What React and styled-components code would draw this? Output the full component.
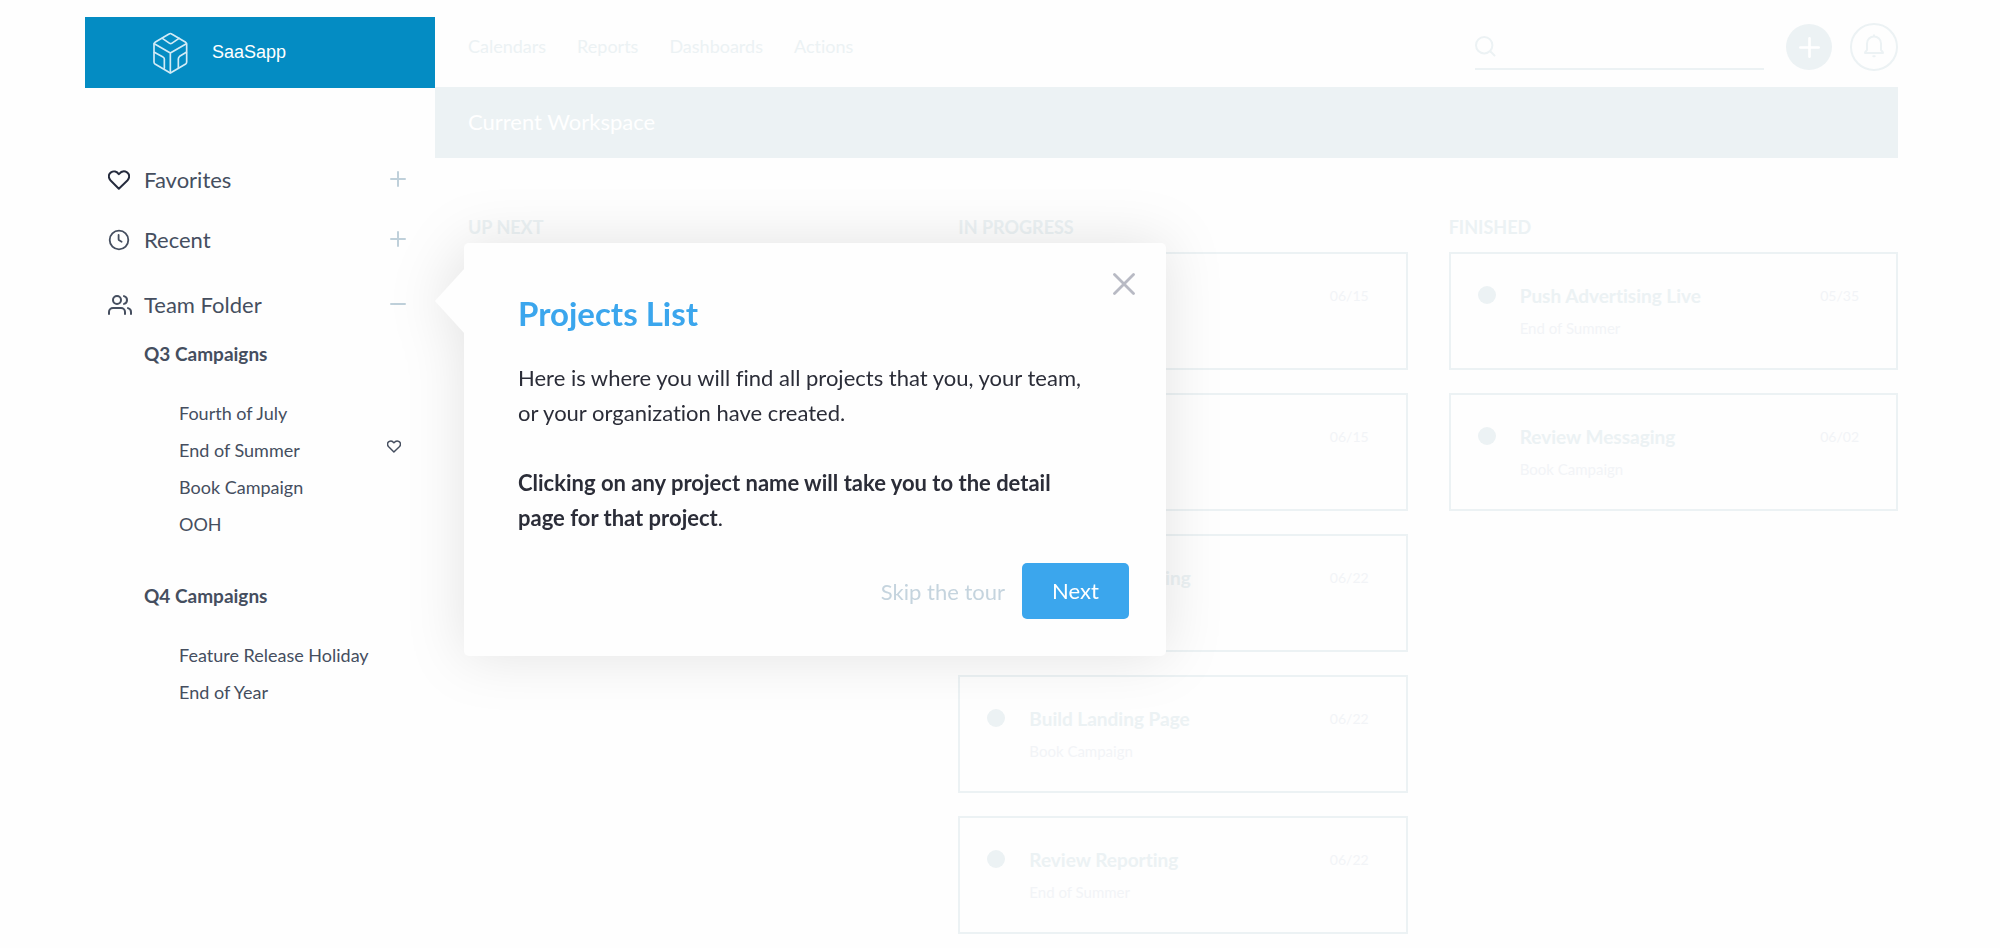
import styled, { createGlobalStyle } from "styled-components";
import { FiUsers } from "react-icons/fi";

const GlobalStyle = createGlobalStyle`
  * {
    box-sizing: border-box;
  }

  body {
    margin: 0;
    background: #fefefe;
    color: #454e5f;
    font-family: Lato, "Open Sans", sans-serif;
    font-size: 18px;
    font-variant-ligatures: none;
  }

  h1, h2, h3, p, ul {
    margin: 0;
    padding: 0;
  }

  ul {
    list-style: none;
  }

  a {
    color: inherit;
    text-decoration: none;
  }

  button {
    padding: 0;
    border: 0;
    background: none;
    color: inherit;
    font: inherit;
    cursor: pointer;
  }

  svg {
    display: block;
    flex: none;
  }
`;

const q3Projects = [
  { name: "Fourth of July" },
  { name: "End of Summer", favorite: true },
  { name: "Book Campaign" },
  { name: "OOH" },
];

const q4Projects = [{ name: "Feature Release Holiday" }, { name: "End of Year" }];

const inProgress = [
  { due: "06/15" },
  { due: "06/15" },
  { title: "Launch Advertising", due: "06/22" },
  { title: "Build Landing Page", project: "Book Campaign", due: "06/22" },
  { title: "Review Reporting", project: "End of Summer", due: "06/22" },
];

const finished = [
  { title: "Push Advertising Live", project: "End of Summer", due: "05/35" },
  { title: "Review Messaging", project: "Book Campaign", due: "06/02" },
];

const CubeLogo = () => (
  <svg width="35" height="42" viewBox="280 94 105 126" fill="none" stroke="#d3ebf6" strokeWidth="5" strokeLinejoin="round" strokeLinecap="round">
    <path d="M328 100q4-3 8 0l42 25q3 2 3 5v54q0 4-3 6l-42 25q-4 3-8 0l-42-25q-3-2-3-6v-54q0-3 3-5z" />
    <path d="M284 129l48 28 48-28M332 157v59" />
    <path d="M308 113l22 15q3 2 6 0l22-15" />
    <path d="M284 155l26 14q4 2 4 6v28M380 155l-20 12q-4 3-4 8v28" />
  </svg>
);

const HeartIcon = ({ width = 22, height = 20, strokeWidth = 6 }) => (
  <svg width={width} height={height} viewBox="143 509 67 61" fill="none" stroke="currentColor" strokeWidth={strokeWidth} strokeLinejoin="round">
    <path d="M176 566L151 541C143 532 144 521 152 516C160 511 170 513 176 522C183 513 193 511 201 516C209 521 210 532 202 541Z" />
  </svg>
);

const ClockIcon = () => (
  <svg width="22" height="22" viewBox="0 0 22 22" fill="none" stroke="currentColor" strokeWidth="1.8" strokeLinecap="round" strokeLinejoin="round">
    <circle cx="11" cy="11" r="9.3" />
    <path d="M10.6 6v4.2q0 .8.6 1.1l2.4 1.4" />
  </svg>
);

const PlusIcon = ({ size = 16, strokeWidth = 2 }) => (
  <svg width={size} height={size} viewBox="0 0 16 16" stroke="currentColor" strokeWidth={strokeWidth} strokeLinecap="round">
    <path d="M1 8h14M8 1v14" />
  </svg>
);

const MinusIcon = () => (
  <svg width="16" height="16" viewBox="0 0 16 16" stroke="currentColor" strokeWidth="2" strokeLinecap="round">
    <path d="M1 8h14" />
  </svg>
);

const SearchIcon = () => (
  <svg width="21" height="21" viewBox="0 0 21 21" fill="none" stroke="currentColor" strokeWidth="2" strokeLinecap="round">
    <circle cx="9.2" cy="9.2" r="8.2" />
    <path d="M15.5 15.5l4 4" />
  </svg>
);

const BellIcon = () => (
  <svg width="20" height="24" viewBox="0 0 20 24" fill="none" stroke="currentColor" strokeWidth="2" strokeLinecap="round" strokeLinejoin="round">
    <path d="M10 1.2v1.4M3 15.4V9.4C3 5.4 6.2 2.6 10 2.6s7 2.8 7 6.8v6q0 .8.6 1.3l.9.9q.5.5.5 1.4H1q0-.9.5-1.4l.9-.9Q3 16.2 3 15.4z" />
    <path d="M9.3 22.2h1.4" />
  </svg>
);

const CloseIcon = () => (
  <svg width="22" height="22" viewBox="0 0 22 22" stroke="currentColor" strokeWidth="2.8" strokeLinecap="round">
    <path d="M1.5 1.5l19 19M20.5 1.5l-19 19" />
  </svg>
);

const ProjectList = ({ title, projects }) => (
  <Campaign>
    <CampaignTitle>{title}</CampaignTitle>
    <ul>
      {projects.map(({ name, favorite }) => (
        <Project key={name}>
          <a href="#">{name}</a>
          {favorite && <HeartIcon width={14} height={13} strokeWidth={7} />}
        </Project>
      ))}
    </ul>
  </Campaign>
);

const BoardColumn = ({ title, tasks = [] }) => (
  <section>
    <ColumnTitle>{title}</ColumnTitle>
    <Cards>
      {tasks.map(({ title, project, due }, i) => (
        <Card key={i}>
          <Dot />
          <CardBody>
            <CardTitle>{title}</CardTitle>
            <CardProject>{project}</CardProject>
          </CardBody>
          <Due>{due}</Due>
        </Card>
      ))}
    </Cards>
  </section>
);

export default function App() {
  return (
    <>
      <GlobalStyle />
      <Page>
        <Sidebar>
          <Brand href="#">
            <CubeLogo />
            SaaSapp
          </Brand>
          <Sections>
            <SectionRow $color="#252b3d">
              <HeartIcon />
              <SectionName>Favorites</SectionName>
              <Toggle aria-label="Expand Favorites"><PlusIcon /></Toggle>
            </SectionRow>
            <SectionRow>
              <ClockIcon />
              <SectionName>Recent</SectionName>
              <Toggle aria-label="Expand Recent"><PlusIcon /></Toggle>
            </SectionRow>
            <SectionRow $spaced>
              <FiUsers size={24} />
              <SectionName>Team Folder</SectionName>
              <Toggle aria-label="Collapse Team Folder"><MinusIcon /></Toggle>
            </SectionRow>
          </Sections>
          <ProjectList title="Q3 Campaigns" projects={q3Projects} />
          <ProjectList title="Q4 Campaigns" projects={q4Projects} />
        </Sidebar>

        <Main>
          <Header>
            <Nav>
              <a href="#">Calendars</a>
              <a href="#">Reports</a>
              <a href="#">Dashboards</a>
              <a href="#">Actions</a>
            </Nav>
            <Search>
              <SearchIcon />
              <SearchInput type="search" aria-label="Search" />
            </Search>
            <AddButton aria-label="Add"><PlusIcon size={21} /></AddButton>
            <BellButton aria-label="Notifications"><BellIcon /></BellButton>
          </Header>
          <Workspace>Current Workspace</Workspace>
          <Board>
            <BoardColumn title="UP NEXT" />
            <BoardColumn title="IN PROGRESS" tasks={inProgress} />
            <BoardColumn title="FINISHED" tasks={finished} />
          </Board>

          <Popover role="dialog" aria-labelledby="tour-title">
            <CloseButton aria-label="Close"><CloseIcon /></CloseButton>
            <PopoverTitle id="tour-title">Projects List</PopoverTitle>
            <PopoverText>
              Here is where you will find all projects that you, your team, or your organization have created.
            </PopoverText>
            <PopoverText>
              <strong>Clicking on any project name will take you to the detail page for that project</strong>.
            </PopoverText>
            <Actions>
              <SkipButton>Skip the tour</SkipButton>
              <NextButton>Next</NextButton>
            </Actions>
          </Popover>
        </Main>
      </Page>
    </>
  );
}

const Page = styled.div`
  display: flex;
  min-height: 100vh;
  padding: 17px 102px 14px 85px;
`;

const Sidebar = styled.aside`
  flex: none;
  width: 350px;
`;

const Brand = styled.a`
  display: flex;
  align-items: center;
  gap: 24px;
  height: 71px;
  padding-left: 68px;
  background: #048cc3;
  color: #fff;
  font-family: "Liberation Sans", Arial, sans-serif;
  font-size: 18px;
`;

const Sections = styled.div`
  padding: 77px 29px 22px 23px;
`;

const SectionRow = styled.div`
  display: grid;
  grid-template-columns: 24px 1fr auto;
  align-items: center;
  column-gap: 12px;
  height: 30px;
  margin-bottom: ${({ $spaced }) => ($spaced ? "0" : "30px")};
  margin-top: ${({ $spaced }) => ($spaced ? "35px" : "0")};
  color: ${({ $color }) => $color || "#454e5f"};
`;

const SectionName = styled.h2`
  color: #454e5f;
  font-size: 22px;
  font-weight: 400;
  line-height: 30px;
`;

const Toggle = styled.button`
  padding-bottom: 2px;
  color: #bfd0da;
`;

const Campaign = styled.section`
  padding: 0 34px 40px 59px;
`;

const CampaignTitle = styled.h3`
  margin-bottom: 30px;
  font-size: 19px;
  font-weight: 700;
  line-height: 24px;
`;

const Project = styled.li`
  display: flex;
  align-items: flex-start;
  justify-content: space-between;
  height: 37px;
  padding: 7px 0 0 35px;
  line-height: 20px;
`;

const Main = styled.main`
  position: relative;
  flex: 1;
  min-width: 0;
`;

const Header = styled.header`
  display: flex;
  align-items: center;
  height: 70px;
  padding: 6px 0 16px 33px;
  color: #ecf2f4;
`;

const Nav = styled.nav`
  display: flex;
  flex: 1;
  gap: 31px;
  padding-bottom: 2px;
`;

const Search = styled.label`
  display: flex;
  align-items: center;
  gap: 12px;
  width: 289px;
  height: 46px;
  margin-right: 22px;
  border-bottom: 2px solid #ecf2f4;
`;

const SearchInput = styled.input`
  flex: 1;
  min-width: 0;
  border: 0;
  outline: 0;
  background: none;
  color: #454e5f;
  font: inherit;
`;

const AddButton = styled.button`
  display: grid;
  place-items: center;
  width: 46px;
  height: 46px;
  margin-right: 18px;
  border-radius: 50%;
  background: #ecf2f4;
  color: #fff;
`;

const BellButton = styled.button`
  display: grid;
  place-items: center;
  width: 48px;
  height: 48px;
  padding-bottom: 3px;
  border: 2px solid #ecf2f4;
  border-radius: 50%;
`;

const Workspace = styled.h1`
  padding: 0 33px 2px;
  background: #ecf2f4;
  color: #fff;
  font-size: 22px;
  font-weight: 400;
  line-height: 69px;
`;

const Board = styled.div`
  display: grid;
  grid-template-columns: repeat(3, minmax(0, 1fr));
  gap: 41px;
  padding: 57px 0 0 33px;
`;

const ColumnTitle = styled.h2`
  margin-bottom: 13px;
  color: #ecf2f4;
  font-size: 18px;
  font-weight: 700;
  line-height: 24px;
`;

const Cards = styled.div`
  display: grid;
  gap: 23px;
`;

const Card = styled.article`
  display: flex;
  align-items: flex-start;
  min-height: 118px;
  padding: 30px 37px 0 27px;
  border: 2px solid #ecf2f4;
  background: #fefefe;
`;

const Dot = styled.span`
  width: 18px;
  height: 18px;
  margin: 2px 24px 0 0;
  border-radius: 50%;
  background: #ecf2f4;
`;

const CardBody = styled.div`
  flex: 1;
`;

const CardTitle = styled.h3`
  min-height: 24px;
  color: #ecf2f4;
  font-size: 19px;
  font-weight: 700;
  line-height: 24px;
`;

const CardProject = styled.p`
  margin-top: 10px;
  color: #f2f4f7;
  font-size: 15px;
  line-height: 20px;
`;

const Due = styled.span`
  color: #f2f4f7;
  font-size: 14px;
  line-height: 24px;
`;

const Popover = styled.div`
  position: absolute;
  top: 226px;
  left: 29px;
  width: 702px;
  padding: 50px 37px 37px 54px;
  border-radius: 5px;
  background: #fefefe;
  color: #2b2d38;
  filter: drop-shadow(0 0 28px rgba(0, 0, 0, 0.11));

  &::before {
    content: "";
    position: absolute;
    top: 25px;
    left: -29px;
    border: solid transparent;
    border-width: 33px 30px 33px 0;
    border-right-color: #fefefe;
  }
`;

const PopoverTitle = styled.h2`
  margin-bottom: 27px;
  color: #3ba6ed;
  font-size: 33px;
  font-weight: 700;
  line-height: 40px;
`;

const PopoverText = styled.p`
  max-width: 575px;
  font-size: 22px;
  line-height: 35px;

  & + & {
    margin-top: 35px;
  }
`;

const CloseButton = styled.button`
  position: absolute;
  top: 26px;
  right: 27px;
  display: grid;
  place-items: center;
  width: 30px;
  height: 30px;
  color: #b8bac4;
`;

const Actions = styled.div`
  display: flex;
  align-items: center;
  justify-content: flex-end;
  gap: 17px;
  margin-top: 28px;
  font-size: 22px;
`;

const SkipButton = styled.button`
  color: #c5d4de;
`;

const NextButton = styled.button`
  width: 107px;
  height: 56px;
  padding-bottom: 2px;
  border-radius: 5px;
  background: #3ba6ed;
  color: #fff;
`;
